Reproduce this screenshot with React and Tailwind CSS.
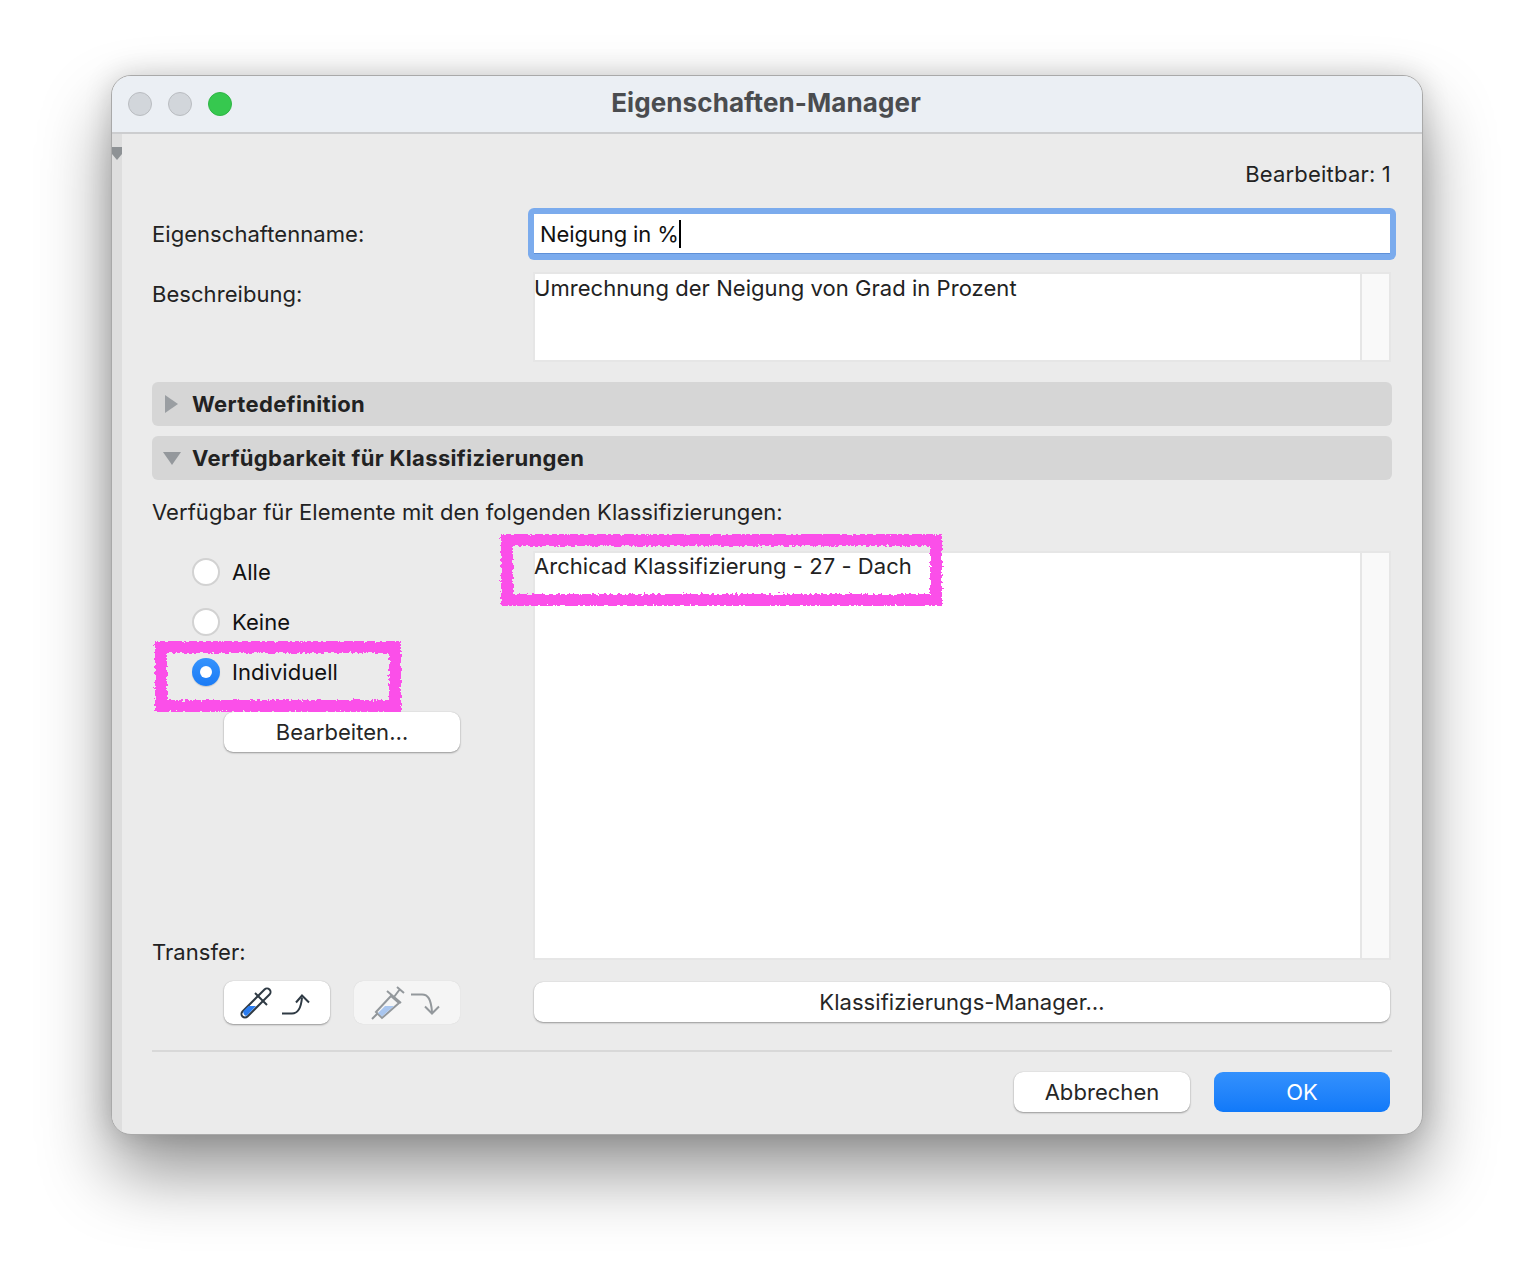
const btn = "bg-white rounded-[9px] shadow-[0_1px_2px_rgba(0,0,0,0.35),0_0_1px_rgba(0,0,0,0.2)] flex items-center justify-center text-[#262626]";

function Radio({ label, checked, className = "" }) {
  return (
    <div className={"flex items-center h-7 ml-10 " + className}>
      {checked ? (
        <span className="w-7 h-7 rounded-full bg-gradient-to-b from-[#3593fd] to-[#1a7bf5] flex items-center justify-center shadow-[0_1px_1px_rgba(0,0,0,0.15)]">
          <span className="w-3 h-3 rounded-full bg-white" />
        </span>
      ) : (
        <span className="w-7 h-7 rounded-full bg-white border-2 border-[#d2d2d2]" />
      )}
      <span className="ml-3 text-[#111]">{label}</span>
    </div>
  );
}

function TextBox({ className = "", textClassName = "", children }) {
  return (
    <div className={"ml-[381px] mr-[1px] border-2 border-[#e6e6e6] bg-white flex " + className}>
      <div className={"flex-1 -ml-[1px] text-[#222] " + textClassName}>{children}</div>
      <div className="w-[29px] bg-[#f9f9f9] border-l-2 border-[#e6e6e6]" />
    </div>
  );
}

function Section({ title, open, className = "" }) {
  return (
    <div className={"h-11 rounded-[6px] bg-[#d6d6d6] flex items-center pl-[11px] " + className}>
      <svg width="18" height="18" viewBox="0 0 18 18" className="shrink-0">
        {open ? <path d="M0 3H18L9 16Z" fill="#94989c" /> : <path d="M2 0L15 9L2 18Z" fill="#9a9ea2" />}
      </svg>
      <span className="ml-[11px] font-bold text-[#222] tracking-[0.35px]">{title}</span>
    </div>
  );
}

function Scribble({ className, w, h }) {
  return (
    <svg width={w} height={h} className={"absolute pointer-events-none " + className} viewBox={`0 0 ${w} ${h}`}>
      <defs>
        <filter id={`rough${w}`} x="-5%" y="-10%" width="110%" height="120%">
          <feTurbulence type="fractalNoise" baseFrequency="0.35" numOctaves="2" seed="3" />
          <feDisplacementMap in="SourceGraphic" scale="6" />
        </filter>
      </defs>
      <rect x="9" y="9" width={w - 18} height={h - 18} fill="none" stroke="#fb4fe9" strokeWidth="12" filter={`url(#rough${w})`} />
    </svg>
  );
}

export default function App() {
  return (
    <div className="w-[1534px] h-[1282px] bg-white overflow-hidden pt-[75px] pl-[111px]" style={{ fontFamily: "Inter, 'Noto Sans', sans-serif" }}>
      <div className="relative w-[1312px] h-[1060px] rounded-[20px] bg-[#ebebeb] border border-[#a9a9a9] overflow-hidden shadow-[0_38px_70px_rgba(0,0,0,0.42),0_0_28px_rgba(0,0,0,0.16)] text-[22px] leading-7 tracking-[0.05px]">
        <div className="h-[58px] bg-[#ebeff4] border-b-2 border-[#cccdcf] flex items-center relative pl-[16px]">
          <span className="w-6 h-6 rounded-full bg-[#d2d6db] border border-[#b9bcc0]" />
          <span className="w-6 h-6 rounded-full bg-[#d2d6db] border border-[#b9bcc0] ml-4" />
          <span className="w-6 h-6 rounded-full bg-[#36c84f] border border-[#2fb545] ml-4" />
          <span className="absolute left-0 right-0 top-[13px] text-center font-bold text-[26px] text-[#4a4c4f] tracking-[0.1px] pr-[2px]">Eigenschaften-Manager</span>
        </div>
        <div className="flex h-[1000px]">
          <div className="w-[10px] bg-[#dedede] relative">
            <svg width="11" height="14" viewBox="0 0 11 14" className="absolute top-[13px] left-0">
              <path d="M0 0H10V7L5 13L0 7Z" fill="#8e9295" />
            </svg>
          </div>
          <div className="flex-1 pl-[30px] pr-[30px]">
            <div className="text-right pt-[26px] pr-[1px] h-[70px] text-[#222] tracking-[0.2px]">Bearbeitbar: 1</div>

            <div className="relative h-[68px] pt-[4px]">
              <div className="absolute left-0 top-[16px] text-[#222]">Eigenschaftenname:</div>
              <div className="ml-[376px] mr-[-4px] h-[52px] rounded-[6px] bg-[#7babed] p-[6px]">
                <div className="h-10 bg-white border-b border-[#5e90d8] flex items-center pl-[6px] text-[#111] tracking-[-0.1px]">
                  Neigung in %<span className="w-[2px] h-7 bg-black" />
                </div>
              </div>
            </div>

            <div className="relative h-[110px]">
              <div className="absolute left-0 top-[8px] text-[#222]">Beschreibung:</div>
              <TextBox className="h-[90px]">Umrechnung der Neigung von Grad in Prozent</TextBox>
            </div>

            <Section title="Wertedefinition" />
            <Section title="Verfügbarkeit für Klassifizierungen" open className="mt-[10px]" />

            <div className="mt-[18px] text-[#222]">Verfügbar für Elemente mit den folgenden Klassifizierungen:</div>

            <div className="relative mt-[25px] h-[410px]">
              <TextBox className="h-[409px]" textClassName="-mt-[1px]">
                <span className="whitespace-nowrap">Archicad Klassifizierung - 27 - Dach</span>
              </TextBox>
              <div className="absolute left-0 top-0">
                <Radio label="Alle" className="mt-[7px]" />
                <Radio label="Keine" className="mt-[22px]" />
                <Radio label="Individuell" checked className="mt-[22px]" />
                <div className={btn + " ml-[72px] mt-[26px] w-[236px] h-10"}>Bearbeiten…</div>
              </div>
              <div className="absolute left-0 bottom-[-5px] text-[#222]">Transfer:</div>
            </div>

            <div className="flex mt-[20px] h-[44px]">
              <div className={btn + " ml-[72px] w-[106px] h-[43px] gap-[7px] pr-[4px]"}>
                <svg width="34" height="34" viewBox="0 0 34 34" fill="none">
                  <path d="M2.5 25.5L24.5 3.5A3.5 3.5 0 0 1 29.5 8.5L7.5 30.5A3.5 3.5 0 0 1 2.5 25.5Z" fill="#fff" stroke="#2f3a44" strokeWidth="2" />
                  <path d="M3.5 25L8.5 20H16L7 29.5C5 31 2.5 27 3.5 25Z" fill="#2a7cf0" />
                  <path d="M15 7L27 19" stroke="#2f3a44" strokeWidth="2" />
                </svg>
                <svg width="30" height="24" viewBox="0 0 30 24" fill="none" stroke="#2f3a44" strokeWidth="2">
                  <path d="M1 22.5H11C17 22.5 20 18 21 6.5" />
                  <path d="M15 11.5L21 4.5L28 11.5" />
                </svg>
              </div>
              <div className="ml-[24px] w-[106px] h-[43px] bg-[#f5f5f5] rounded-[9px] shadow-[0_0_1px_rgba(0,0,0,0.15)] flex items-center justify-center gap-[6px] pr-[2px]">
                <svg width="34" height="34" viewBox="0 0 34 34" fill="none">
                  <path d="M1 33L7 27" stroke="#8f9498" strokeWidth="2" />
                  <path d="M5 26L20 10L28 17L11 32Z" fill="#f5f5f5" stroke="#93989c" strokeWidth="2" />
                  <path d="M7 27L14 20H23L11 30.5Z" fill="#a9c6ef" />
                  <path d="M16 5L30 17M23 11L29 3M26 1L33 7" stroke="#93989c" strokeWidth="2" />
                </svg>
                <svg width="30" height="24" viewBox="0 0 30 24" fill="none" stroke="#93989c" strokeWidth="2">
                  <path d="M0 3.5H11C17 3.5 20 8 21 21" />
                  <path d="M14 15.5L21 22.5L28 15.5" />
                </svg>
              </div>
              <div className={btn + " ml-[74px] w-[856px] h-10 mt-[1px]"}>Klassifizierungs-Manager…</div>
            </div>

            <div className="h-[2px] bg-[#d8d8d8] mt-[25px]" />

            <div className="flex justify-end mt-[20px] pr-[2px] gap-6">
              <div className={btn + " w-[176px] h-10"}>Abbrechen</div>
              <div className="w-[176px] h-10 rounded-[9px] bg-gradient-to-b from-[#3391fd] to-[#1079f9] text-white flex items-center justify-center">OK</div>
            </div>
          </div>
        </div>
        <Scribble className="left-[386px] top-[455px]" w={447} h={78} />
        <Scribble className="left-[40px] top-[562px]" w={252} h={77} />
      </div>
    </div>
  );
}
